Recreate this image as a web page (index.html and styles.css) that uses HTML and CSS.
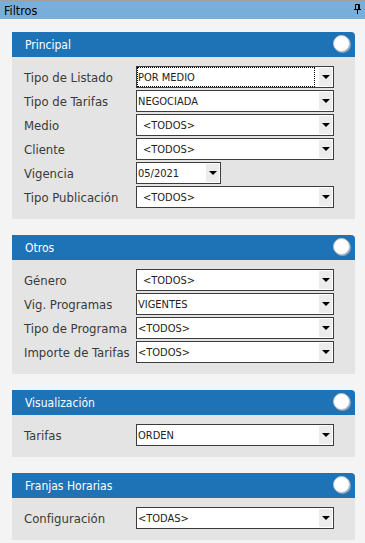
FILE: index.html
```
<!DOCTYPE html>
<html lang="es">
<head>
  <meta charset="UTF-8" />
  <meta name="viewport" content="width=device-width, initial-scale=1.0"/>
  <title>Filtros</title>
  <link rel="stylesheet" href="styles.css">
</head>
<body>

  <div class="title-bar">
    <span>Filtros</span>
    <svg class="pin" width="7" height="10" viewBox="0 0 7 10">
      <path d="M1.5 0.5h4v5h-4z" fill="none" stroke="#000"/>
      <rect x="4" y="1" width="1" height="4" fill="#000"/>
      <rect x="0" y="5" width="7" height="1" fill="#000"/>
      <rect x="3" y="6" width="1" height="4" fill="#000"/>
    </svg>
  </div>

  <div class="content">

    <div class="panel">
      <div class="panel-head">
        <span>Principal</span>
        <span class="toggle"></span>
      </div>
      <div class="panel-body">
        <div class="row">
          <label>Tipo de Listado</label>
          <div class="combo focused"><select><option>POR MEDIO</option></select><span class="arrow"></span></div>
        </div>
        <div class="row">
          <label>Tipo de Tarifas</label>
          <div class="combo"><select><option>NEGOCIADA</option></select><span class="arrow"></span></div>
        </div>
        <div class="row">
          <label>Medio</label>
          <div class="combo"><select class="indent"><option>&lt;TODOS&gt;</option></select><span class="arrow"></span></div>
        </div>
        <div class="row">
          <label>Cliente</label>
          <div class="combo"><select class="indent"><option>&lt;TODOS&gt;</option></select><span class="arrow"></span></div>
        </div>
        <div class="row">
          <label>Vigencia</label>
          <div class="combo short"><select><option>05/2021</option></select><span class="arrow"></span></div>
        </div>
        <div class="row">
          <label>Tipo Publicación</label>
          <div class="combo"><select class="indent"><option>&lt;TODOS&gt;</option></select><span class="arrow"></span></div>
        </div>
      </div>
    </div>

    <div class="panel">
      <div class="panel-head">
        <span>Otros</span>
        <span class="toggle"></span>
      </div>
      <div class="panel-body">
        <div class="row">
          <label>Género</label>
          <div class="combo"><select class="indent"><option>&lt;TODOS&gt;</option></select><span class="arrow"></span></div>
        </div>
        <div class="row">
          <label>Vig. Programas</label>
          <div class="combo"><select><option>VIGENTES</option></select><span class="arrow"></span></div>
        </div>
        <div class="row">
          <label>Tipo de Programa</label>
          <div class="combo"><select><option>&lt;TODOS&gt;</option></select><span class="arrow"></span></div>
        </div>
        <div class="row">
          <label>Importe de Tarifas</label>
          <div class="combo"><select><option>&lt;TODOS&gt;</option></select><span class="arrow"></span></div>
        </div>
      </div>
    </div>

    <div class="panel">
      <div class="panel-head">
        <span>Visualización</span>
        <span class="toggle"></span>
      </div>
      <div class="panel-body">
        <div class="row">
          <label>Tarifas</label>
          <div class="combo"><select><option>ORDEN</option></select><span class="arrow"></span></div>
        </div>
      </div>
    </div>

    <div class="panel">
      <div class="panel-head">
        <span>Franjas Horarias</span>
        <span class="toggle"></span>
      </div>
      <div class="panel-body">
        <div class="row">
          <label>Configuración</label>
          <div class="combo"><select><option>&lt;TODAS&gt;</option></select><span class="arrow"></span></div>
        </div>
      </div>
    </div>

  </div>

</body>
</html>
```

FILE: styles.css
```
body {
  margin: 0;
  background: #f4f4f4;
  font-family: 'DejaVu Sans Condensed', 'DejaVu Sans', sans-serif;
  color: #333;
}

.title-bar {
  display: flex;
  justify-content: space-between;
  align-items: center;
  height: 18px;
  padding: 0 4px 0 4px;
  background: #77aedb;
  border-top: 1px solid #a0a0a0;
  font-size: 12.5px;
  color: #000;
}

.pin {
  margin-top: -3px;
}

.content {
  display: flex;
  flex-direction: column;
  gap: 16px;
  padding: 13px 10px 2px 12px;
}

.panel-head {
  display: flex;
  justify-content: space-between;
  align-items: center;
  height: 25px;
  padding: 0 5px 0 13px;
  background: #1e73b6;
  border-top-right-radius: 4px;
  color: #fff;
  font-size: 12px;
}

.toggle {
  width: 15px;
  height: 15px;
  margin-top: -2px;
  border-radius: 50%;
  background: #fff;
  border: 1px solid #b8c4d0;
  box-shadow: 1px 1px 0 #8ea6bc;
}

.panel-body {
  display: flex;
  flex-direction: column;
  gap: 2px;
  padding: 9px 21px 11px 12px;
  background: #e4e4e4;
}

.row {
  display: flex;
  align-items: center;
  height: 22px;
}

.row label {
  width: 112px;
  flex: none;
  font-size: 13px;
  color: #3a3a3a;
  white-space: nowrap;
}

.combo {
  display: flex;
  flex: 1;
  height: 20px;
  padding: 0 1px 0 0;
  border: 1px solid #3c3c3c;
  background: #fff;
}

.combo.short {
  flex: none;
  width: 82px;
}

.combo select {
  flex: 1;
  min-width: 0;
  -webkit-appearance: none;
  appearance: none;
  border: 0;
  margin: 0 4px 0 0;
  padding: 0 0 0 1px;
  background: #fff;
  font-family: 'DejaVu Sans Condensed', 'DejaVu Sans', sans-serif;
  font-size: 11px;
  color: #222;
  outline: none;
}

.combo select.indent {
  padding-left: 6px;
}

.combo.focused select {
  outline: 1px dotted #000;
  outline-offset: -1px;
}

.arrow {
  display: flex;
  align-items: center;
  justify-content: center;
  width: 13px;
  margin: 1px 0;
  background: #ececec;
}

.arrow::after {
  content: "";
  border-left: 4px solid transparent;
  border-right: 4px solid transparent;
  border-top: 4px solid #000;
}
```
